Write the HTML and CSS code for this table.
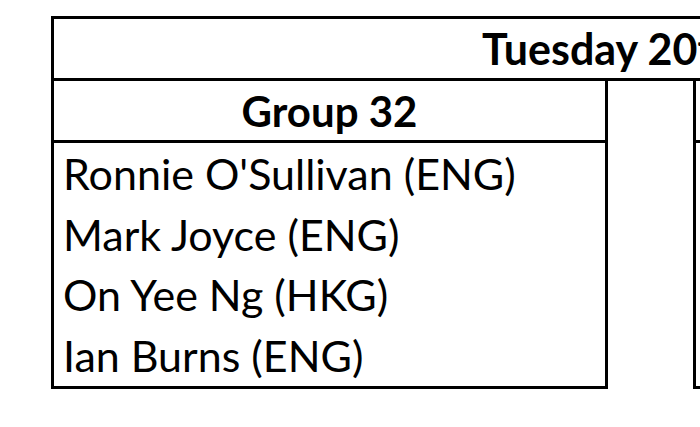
FILE: index.html
```html
<!DOCTYPE html>
<html lang="en">
<head>
<meta charset="utf-8">
<title>Draw</title>
<link rel="stylesheet" href="styles.css">
</head>
<body>
<div class="sheet">
  <div class="title-row"><div class="title">Tuesday 20th November</div></div>
  <div class="cols">
    <div class="group">
      <div class="group-head">Group 32</div>
      <ul class="players">
        <li>Ronnie O'Sullivan (ENG)</li>
        <li>Mark Joyce (ENG)</li>
        <li>On Yee Ng (HKG)</li>
        <li>Ian Burns (ENG)</li>
      </ul>
    </div>
    <div class="spacer"></div>
    <div class="group group-next">
      <div class="group-head"></div>
      <ul class="players">
        <li></li>
        <li></li>
        <li></li>
        <li></li>
      </ul>
    </div>
  </div>
</div>
</body>
</html>
```
FILE: styles.css
```css
html, body {
  margin: 0;
  padding: 0;
  background: #fff;
  overflow: hidden;
}
body {
  width: 700px;
  height: 427px;
  font-family: Lato, "Open Sans", sans-serif;
  color: #000;
}
.sheet {
  margin: 16px 0 0 51px;
  width: 1400px;
  border-top: 3px solid #000;
  border-left: 3px solid #000;
}
.title-row {
  height: 59px;
  border-bottom: 3px solid #000;
  display: flex;
  align-items: center;
}
.title {
  padding-left: 428px;
  font-weight: 700;
  font-size: 43px;
  white-space: nowrap;
}
.cols {
  display: flex;
  align-items: flex-start;
}
.group {
  width: 551px;
  flex: none;
  border-right: 3px solid #000;
  border-bottom: 3px solid #000;
}
.group-next {
  border-left: 3px solid #000;
  border-right: none;
}
.spacer {
  width: 85px;
  flex: none;
}
.group-head {
  height: 59px;
  border-bottom: 3px solid #000;
  display: flex;
  align-items: center;
  justify-content: center;
  font-weight: 700;
  font-size: 42px;
}
.players {
  list-style: none;
  margin: 0;
  padding: 0;
}
.players li {
  height: 60.75px;
  display: flex;
  align-items: center;
  padding-left: 9px;
  font-size: 43px;
  white-space: nowrap;
}
```
